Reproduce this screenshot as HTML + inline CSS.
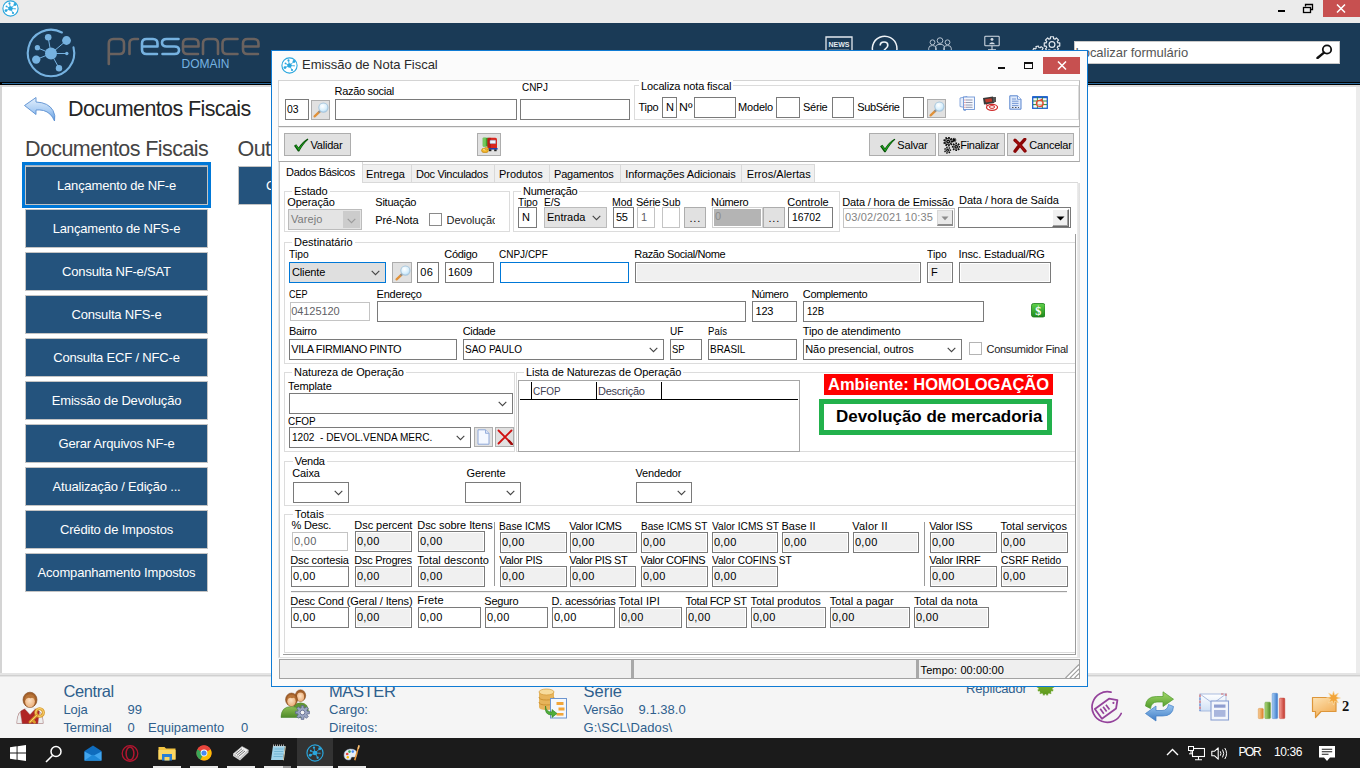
<!DOCTYPE html><html><head><meta charset="utf-8"><title>Emissão de Nota Fiscal</title>
<style>
html,body{margin:0;padding:0;}
body{width:1360px;height:768px;overflow:hidden;position:relative;background:#fff;
 font-family:"Liberation Sans",sans-serif;font-size:11px;color:#000;}
div,span,svg{position:absolute;box-sizing:border-box;}
.t{white-space:nowrap;}
.in{border:1px solid #7a7a7a;background:#fff;white-space:nowrap;overflow:hidden;line-height:14px;padding-left:2px;}
.ing{border:1px solid #7a7a7a;background:#f0f0f0;box-shadow:inset 0 0 0 1px #fff;white-space:nowrap;overflow:hidden;line-height:14px;padding-left:2px;}
.ind{border:1px solid #c4c4c4;background:#fff;color:#5f5f66;white-space:nowrap;overflow:hidden;line-height:14px;padding-left:2px;}
.btn{border:1px solid #adadad;background:#e1e1e1;white-space:nowrap;}
.gb{border:1px solid #dcdcdc;}
.gl{background:#fff;padding:0 2px;white-space:nowrap;line-height:13px;}
.sb{background:#24537d;border:1px solid #c4c4c4;color:#fff;font-size:13px;text-align:center;white-space:nowrap;}
.info{color:#2f5f8d;white-space:nowrap;}
</style></head><body>
<div style="left:0px;top:0px;width:1360px;height:23px;background:#ebebeb;"></div>
<svg style="left:2px;top:0px;" width="17" height="17" viewBox="0 0 17 17"><circle cx="8.5" cy="8.5" r="7.6" fill="#fff" stroke="#2aa7de" stroke-width="1.1"/><g stroke="#2aa7de" stroke-width="0.8"><path d="M8.5 8.5L7.5 3.5M8.5 8.5L13 4.5M8.5 8.5L13.2 8.8M8.5 8.5L11 13M8.5 8.5L4 10.5M8.5 8.5L4.5 6.5"/></g><g fill="#2aa7de"><circle cx="8.5" cy="8.5" r="2.2"/><circle cx="7.5" cy="3.4" r="1.1"/><circle cx="13" cy="4.5" r="1.4"/><circle cx="13.3" cy="8.8" r="0.8" fill-opacity="0.6"/><circle cx="11" cy="13" r="1.1"/><circle cx="4" cy="10.6" r="1.4"/><circle cx="4.5" cy="6.4" r="0.9"/></g></svg>
<div style="left:1278px;top:10px;width:7px;height:2px;background:#000;"></div>
<svg style="left:1302px;top:3px;" width="12" height="11" viewBox="0 0 12 11"><path d="M3.5 3.5V1.5H10.5V6.5H8.5" fill="none" stroke="#000" stroke-width="1.3"/><rect x="1.5" y="4.5" width="7" height="5" fill="#ebebeb" stroke="#000" stroke-width="1.3"/></svg>
<div style="left:1323px;top:0px;width:37px;height:17px;background:#c75050;"></div>
<svg style="left:1336px;top:4px;" width="10" height="9" viewBox="0 0 10 9"><path d="M1 0.5L9 8.5M9 0.5L1 8.5" stroke="#fff" stroke-width="1.5"/></svg>
<div style="left:0px;top:23px;width:1360px;height:59px;background:#1a3a56;"></div>
<div style="left:0px;top:82px;width:1360px;height:3px;background:#000;"></div>
<div style="left:2px;top:83px;width:1358px;height:1px;background:#2a6a9c;"></div>
<div style="left:0px;top:85px;width:1360px;height:2px;background:#dcdcdc;"></div>
<svg style="left:24px;top:26px;" width="54" height="54" viewBox="0 0 54 54"><path d="M49.51 21.39A23.2 23.2 0 1 1 37.89 6.52" fill="none" stroke="#76b2e0" stroke-width="2.1" stroke-linecap="round"/><g stroke="#76b2e0" stroke-width="1"><path d="M27 27.5L24.2 11.5M27 27.5L42.5 14.5M27 27.5L42.8 27.5M27 27.5L35 42M27 27.5L12.3 33.5M27 27.5L13.5 21.8"/></g><g fill="#76b2e0"><circle cx="27" cy="27.5" r="6"/><circle cx="24.2" cy="11.3" r="3.3"/><circle cx="42.5" cy="14.5" r="4.4"/><circle cx="42.8" cy="27.5" r="1.7"/><circle cx="35" cy="42.2" r="3.2"/><circle cx="12.2" cy="33.6" r="4.2"/><circle cx="13.4" cy="21.7" r="2.6"/></g></svg>
<svg style="left:104px;top:34px;" width="160" height="36" viewBox="0 0 160 36"><path d="M4.8 30V9.5Q4.8 5 9.3 5H15.5Q20 5 20 9.5V15.5Q20 20 15.5 20H5" fill="none" stroke="#6a625f" stroke-width="2.6" stroke-linecap="round"/><path d="M25.5 20V9.5Q25.5 5 30 5H34" fill="none" stroke="#6a625f" stroke-width="2.6" stroke-linecap="round"/><path d="M38.0 12.5H53.5V9.5Q53.5 5 49.0 5H42.5Q38.0 5 38.0 9.5V15.5Q38.0 20 42.5 20H53.0" fill="none" stroke="#76b2e0" stroke-width="2.6" stroke-linecap="round" stroke-linejoin="round"/><path d="M74.5 5H62.5Q58 5 58 8.8Q58 12.5 62.5 12.5H70.5Q75 12.5 75 16.2Q75 20 70.5 20H58.5" fill="none" stroke="#76b2e0" stroke-width="2.6" stroke-linecap="round"/><path d="M79.0 12.5H94.5V9.5Q94.5 5 90.0 5H83.5Q79.0 5 79.0 9.5V15.5Q79.0 20 83.5 20H94.0" fill="none" stroke="#6a625f" stroke-width="2.6" stroke-linecap="round" stroke-linejoin="round"/><path d="M99 20V9.5Q99 5 103.5 5H109.5Q114 5 114 9.5V20" fill="none" stroke="#6a625f" stroke-width="2.6" stroke-linecap="round"/><path d="M133.5 5H123Q118.5 5 118.5 9.5V15.5Q118.5 20 123 20H133.5" fill="none" stroke="#6a625f" stroke-width="2.6" stroke-linecap="round"/><path d="M139.0 12.5H154.5V9.5Q154.5 5 150.0 5H143.5Q139.0 5 139.0 9.5V15.5Q139.0 20 143.5 20H154.0" fill="none" stroke="#6a625f" stroke-width="2.6" stroke-linecap="round" stroke-linejoin="round"/><text x="77.5" y="34" font-family="Liberation Sans, sans-serif" font-size="12.6" fill="#76b2e0" textLength="48" lengthAdjust="spacingAndGlyphs" style="font-stretch:condensed">DOMAIN</text></svg>
<svg style="left:818px;top:34px;" width="36" height="30" viewBox="0 0 36 30"><path d="M8 29V3H34V29" fill="none" stroke="#e3e9ef" stroke-width="1.3"/><path d="M2.5 23V29H8" fill="none" stroke="#e3e9ef" stroke-width="1.3"/><text x="10.5" y="12.8" font-family="Liberation Sans, sans-serif" font-weight="bold" font-size="8" fill="#e3e9ef" textLength="21" lengthAdjust="spacingAndGlyphs">NEWS</text><path d="M11 16.5H31" stroke="#e3e9ef" stroke-width="1.6"/></svg>
<svg style="left:868.2px;top:34.2px;" width="32" height="32" viewBox="0 0 32 32"><path d="M26 22.5A12.3 12.3 0 1 0 16 26.8" fill="none" stroke="#eef2f6" stroke-width="1.5"/><path d="M12.2 11.5Q12.2 8 16 8Q19.8 8 19.8 11.3Q19.8 13.3 17.7 14.6Q16 15.7 16 17.5" fill="none" stroke="#eef2f6" stroke-width="1.7"/><circle cx="16" cy="20.8" r="1.1" fill="#eef2f6"/></svg>
<svg style="left:926.2px;top:35.5px;" width="28" height="24" viewBox="0 0 28 24"><circle cx="6.5" cy="6.3" r="2.43" fill="none" stroke="#b4c1cf" stroke-width="1"/><path d="M2.72 15.30V12.15Q2.72 9.54 6.5 9.54Q10.28 9.54 10.28 12.15V15.30" fill="none" stroke="#b4c1cf" stroke-width="1"/><circle cx="21.5" cy="6.3" r="2.43" fill="none" stroke="#b4c1cf" stroke-width="1"/><path d="M17.72 15.30V12.15Q17.72 9.54 21.5 9.54Q25.28 9.54 25.28 12.15V15.30" fill="none" stroke="#b4c1cf" stroke-width="1"/><circle cx="14" cy="4.6" r="2.84" fill="none" stroke="#b4c1cf" stroke-width="1"/><path d="M9.59 15.10V11.43Q9.59 8.38 14 8.38Q18.41 8.38 18.41 11.43V15.10" fill="none" stroke="#b4c1cf" stroke-width="1"/></svg>
<svg style="left:984px;top:35px;" width="16" height="19.2" viewBox="0 0 20 24"><rect x="1" y="1.5" width="18" height="12" rx="1" fill="none" stroke="#d5dde6" stroke-width="1.3"/><circle cx="10" cy="5.5" r="1.8" fill="#d5dde6"/><path d="M6 11.5Q10 6.5 14 11.5Z" fill="#d5dde6"/><path d="M10 13.5V18M5 18.5H15" stroke="#d5dde6" stroke-width="1.3"/></svg>
<svg style="left:1030px;top:34px;" width="32" height="30" viewBox="0 0 32 30"><path d="M29.75 8.96L29.75 12.04L27.90 12.04L27.26 13.58L28.57 14.89L26.39 17.07L25.08 15.76L23.54 16.40L23.54 18.25L20.46 18.25L20.46 16.40L18.92 15.76L17.61 17.07L15.43 14.89L16.74 13.58L16.10 12.04L14.25 12.04L14.25 8.96L16.10 8.96L16.74 7.42L15.43 6.11L17.61 3.93L18.92 5.24L20.46 4.60L20.46 2.75L23.54 2.75L23.54 4.60L25.08 5.24L26.39 3.93L28.57 6.11L27.26 7.42L27.90 8.96Z" fill="none" stroke="#e3e9ef" stroke-width="1.2" stroke-linejoin="round"/><circle cx="22" cy="10.5" r="2.9" fill="none" stroke="#e3e9ef" stroke-width="1.2"/><path d="M14.35 16.66L14.35 19.34L12.81 19.29L12.20 20.56L13.19 21.74L11.10 23.41L10.18 22.18L8.80 22.49L8.50 24.00L5.90 23.41L6.28 21.91L5.18 21.04L3.81 21.74L2.65 19.34L4.06 18.70L4.06 17.30L2.65 16.66L3.81 14.26L5.18 14.96L6.28 14.09L5.90 12.59L8.50 12.00L8.80 13.51L10.18 13.82L11.10 12.59L13.19 14.26L12.20 15.44L12.81 16.71Z" fill="none" stroke="#e3e9ef" stroke-width="1.1" stroke-linejoin="round"/></svg>
<div style="left:1074px;top:41px;width:266px;height:23px;background:#fff;border:1px solid #c9c9c9;"></div>
<span class="t" style="left:1075.5px;top:45px;line-height:16px;font-size:13px;color:#555;letter-spacing:-0.04px;">Localizar formulário</span>
<svg style="left:1316px;top:44px;" width="17" height="15" viewBox="0 0 17 15"><circle cx="11" cy="5.5" r="4.2" fill="none" stroke="#111" stroke-width="1.8"/><path d="M8 8.6L1.5 14" stroke="#111" stroke-width="2.4" stroke-linecap="round"/></svg>
<div style="left:0px;top:87px;width:1360px;height:586px;background:#fff;"></div>
<div style="left:0px;top:85px;width:2px;height:590px;background:#d4d4d4;"></div>
<div style="left:1356px;top:87px;width:4px;height:588px;background:#ececec;"></div>
<div style="left:0px;top:673px;width:1360px;height:4px;background:#e4e4e4;"></div>
<div style="left:0px;top:675px;width:1360px;height:1px;background:#d0d0d0;"></div>
<svg style="left:23px;top:94px;" width="34" height="28" viewBox="0 0 34 28"><defs><linearGradient id="ba" x1="0" y1="0" x2="0" y2="1"><stop offset="0" stop-color="#e6f1fc"/><stop offset="0.55" stop-color="#a9ccf3"/><stop offset="1" stop-color="#5f9be0"/></linearGradient></defs><path d="M1.5 11.5L13 3.5V8Q25.5 8.5 30 16.5Q32.8 21.5 31.5 27Q28 18.5 20.5 16.5Q16.5 15.6 13 16V20.5Z" fill="url(#ba)" stroke="#5a8fd0" stroke-width="0.9" stroke-linejoin="round"/></svg>
<span class="t" style="left:68px;top:95px;line-height:28px;font-size:21.5px;color:#262626;letter-spacing:-0.61px;">Documentos Fiscais</span>
<span class="t" style="left:25px;top:135px;line-height:28px;font-size:21.5px;color:#444;letter-spacing:-0.58px;">Documentos Fiscais</span>
<span class="t" style="left:237.5px;top:135px;line-height:28px;font-size:21.5px;color:#444;letter-spacing:-0.58px;">Out</span>
<div style="left:22px;top:162px;width:189px;height:46px;background:#9db3c8;border:3px solid #0078d7;"></div>
<div class="sb" style="left:25px;top:166px;width:183px;height:39px;line-height:37px;letter-spacing:-0.173px;">Lançamento de NF-e</div>
<div class="sb" style="left:25px;top:209px;width:183px;height:39px;line-height:37px;letter-spacing:-0.173px;">Lançamento de NFS-e</div>
<div class="sb" style="left:25px;top:252px;width:183px;height:39px;line-height:37px;letter-spacing:-0.173px;">Consulta NF-e/SAT</div>
<div class="sb" style="left:25px;top:295px;width:183px;height:39px;line-height:37px;letter-spacing:-0.173px;">Consulta NFS-e</div>
<div class="sb" style="left:25px;top:338px;width:183px;height:39px;line-height:37px;letter-spacing:-0.173px;">Consulta ECF / NFC-e</div>
<div class="sb" style="left:25px;top:381px;width:183px;height:39px;line-height:37px;letter-spacing:-0.173px;">Emissão de Devolução</div>
<div class="sb" style="left:25px;top:424px;width:183px;height:39px;line-height:37px;letter-spacing:-0.173px;">Gerar Arquivos NF-e</div>
<div class="sb" style="left:25px;top:467px;width:183px;height:39px;line-height:37px;letter-spacing:-0.173px;">Atualização / Edição ...</div>
<div class="sb" style="left:25px;top:510px;width:183px;height:39px;line-height:37px;letter-spacing:-0.173px;">Crédito de Impostos</div>
<div class="sb" style="left:25px;top:553px;width:183px;height:39px;line-height:37px;letter-spacing:-0.173px;">Acompanhamento Impostos</div>
<div class="sb" style="left:238px;top:166px;width:183px;height:39px;line-height:37px;text-align:left;padding-left:27px;">C</div>
<div style="left:0px;top:677px;width:1360px;height:61px;background:#f5f5f5;"></div>
<svg style="left:15px;top:691px;" width="30" height="34" viewBox="0 0 30 34"><defs><radialGradient id="sk" cx="0.45" cy="0.4" r="0.7"><stop offset="0" stop-color="#fde2c4"/><stop offset="1" stop-color="#e9a870"/></radialGradient></defs><path d="M2 32.5Q2 20 10 18L15 22.5L20 18Q28 20 28 32.5Z" fill="#b02525" stroke="#7a1515" stroke-width="0.6"/><path d="M10 18L15 23.5L20 18L17.5 16.5H12.5Z" fill="#f6f6f6" stroke="#bdbdbd" stroke-width="0.4"/><path d="M2 32.5Q2 24.5 5.2 21L7 32.5ZM28 32.5Q28 24.5 24.8 21L23 32.5Z" fill="#eeeeee" stroke="#bdbdbd" stroke-width="0.4"/><ellipse cx="15" cy="8.8" rx="7" ry="7.6" fill="#a3602a" stroke="#7c4318" stroke-width="0.6"/><ellipse cx="15" cy="10.6" rx="4.9" ry="5.8" fill="url(#sk)"/><path d="M9.6 9.5Q12.5 5.6 15.5 7.2Q18.5 5.8 20.4 9.5Q20 3.2 15 3.2Q10 3.2 9.6 9.5Z" fill="#b87438"/><circle cx="24.6" cy="21.5" r="3.8" fill="none" stroke="#d99a2a" stroke-width="3"/><circle cx="24.6" cy="21.5" r="3.8" fill="none" stroke="#f7d070" stroke-width="1.2"/><path d="M21.8 24.3L15 31M17.2 28.8L19.6 31.2" stroke="#d99a2a" stroke-width="2.8" stroke-linecap="round"/><path d="M21.8 24.3L15.2 30.8" stroke="#f7d070" stroke-width="1" stroke-linecap="round"/></svg>
<span class="t info" style="left:63.5px;top:681px;line-height:20px;font-size:16.5px;letter-spacing:-0.41px;">Central</span>
<span class="t info" style="left:63.5px;top:702px;line-height:16px;font-size:13px;letter-spacing:-0.14px;">Loja</span>
<span class="t info" style="left:127.5px;top:702px;line-height:16px;font-size:13px;letter-spacing:-0.04px;">99</span>
<span class="t info" style="left:63.5px;top:720px;line-height:16px;font-size:13px;letter-spacing:-0.14px;">Terminal</span>
<span class="t info" style="left:127.5px;top:720px;line-height:16px;font-size:13px;">0</span>
<span class="t info" style="left:148px;top:720px;line-height:16px;font-size:13px;letter-spacing:-0.04px;">Equipamento</span>
<span class="t info" style="left:241px;top:720px;line-height:16px;font-size:13px;">0</span>
<svg style="left:280px;top:688px;" width="30" height="32" viewBox="0 0 30 32"><defs><radialGradient id="sk2" cx="0.45" cy="0.4" r="0.7"><stop offset="0" stop-color="#fde2c4"/><stop offset="1" stop-color="#e9a870"/></radialGradient><linearGradient id="gr2" x1="0" y1="0" x2="0" y2="1"><stop offset="0" stop-color="#8fbf55"/><stop offset="1" stop-color="#4f8a2a"/></linearGradient></defs><path d="M12 25Q12 14.5 20.5 14.5Q29 14.5 29 25Z" fill="#5f9435"/><ellipse cx="20.5" cy="7.6" rx="5.2" ry="5.8" fill="#a3602a" stroke="#7c4318" stroke-width="0.5"/><ellipse cx="20.5" cy="9" rx="3.6" ry="4.4" fill="url(#sk2)"/><path d="M1 29.5Q1 18.5 11.5 18.5Q22 18.5 22 29.5Z" fill="url(#gr2)" stroke="#3f7a22" stroke-width="0.5"/><ellipse cx="11.5" cy="11.6" rx="6" ry="6.6" fill="#a3602a" stroke="#7c4318" stroke-width="0.5"/><ellipse cx="11.5" cy="13.2" rx="4.2" ry="5" fill="url(#sk2)"/><path d="M7 12Q9.5 8.8 12 10.2Q14.6 8.8 16 12Q15.6 6.8 11.5 6.8Q7.4 6.8 7 12Z" fill="#b87438"/><path d="M29.37 23.13L29.37 25.87L27.34 25.76L26.81 27.03L28.32 28.39L26.39 30.32L25.03 28.81L23.76 29.34L23.87 31.37L21.13 31.37L21.24 29.34L19.97 28.81L18.61 30.32L16.68 28.39L18.19 27.03L17.66 25.76L15.63 25.87L15.63 23.13L17.66 23.24L18.19 21.97L16.68 20.61L18.61 18.68L19.97 20.19L21.24 19.66L21.13 17.63L23.87 17.63L23.76 19.66L25.03 20.19L26.39 18.68L28.32 20.61L26.81 21.97L27.34 23.24Z" fill="#9aa5c2" stroke="#5a668a" stroke-width="0.8"/><circle cx="22.5" cy="24.5" r="2.3" fill="#f5f5f5" stroke="#5a668a" stroke-width="0.8"/></svg>
<span class="t info" style="left:329px;top:681px;line-height:20px;font-size:16.5px;letter-spacing:-0.39px;">MASTER</span>
<span class="t info" style="left:329px;top:702px;line-height:16px;font-size:13px;letter-spacing:-0.01px;">Cargo:</span>
<span class="t info" style="left:329px;top:720px;line-height:16px;font-size:13px;letter-spacing:0.12px;">Direitos:</span>
<svg style="left:537px;top:688px;" width="32" height="32" viewBox="0 0 32 32"><path d="M2 4V19Q2 22 9.5 22Q17 22 17 19V4Z" fill="#e7b45a"/><ellipse cx="9.5" cy="4" rx="7.5" ry="3" fill="#f7dc9c" stroke="#d39a3a" stroke-width="0.7"/><path d="M2 9Q2 12 9.5 12Q17 12 17 9M2 14Q2 17 9.5 17Q17 17 17 14" fill="none" stroke="#c98f2e" stroke-width="0.9"/><rect x="13.5" y="10.5" width="16" height="19.5" fill="#f4f8fd" stroke="#6d95cf" stroke-width="1"/><rect x="19.5" y="14" width="7" height="3" fill="#f2a63a"/><rect x="21.5" y="19.5" width="6" height="3" fill="#f2a63a"/><rect x="19.5" y="25" width="7" height="2.6" fill="#f2a63a"/><path d="M8.5 18Q9 24 15 24V21.5L20 25.5L15 29.5V27Q7 27 8.5 18Z" fill="#4fae3a" stroke="#2e7d22" stroke-width="0.6"/></svg>
<span class="t info" style="left:583.5px;top:681px;line-height:20px;font-size:16.5px;">Série</span>
<span class="t info" style="left:583.5px;top:702px;line-height:16px;font-size:13px;letter-spacing:-0.08px;">Versão</span>
<span class="t info" style="left:638.5px;top:702px;line-height:16px;font-size:13px;letter-spacing:0.03px;">9.1.38.0</span>
<span class="t info" style="left:583.5px;top:720px;line-height:16px;font-size:13px;letter-spacing:0.1px;">G:\SCL\Dados\</span>
<span class="t info" style="left:966px;top:681px;line-height:16px;font-size:13px;letter-spacing:-0.14px;">Replicador</span>
<svg style="left:1036px;top:680px;" width="19" height="18" viewBox="0 0 19 18"><defs><linearGradient id="gg" x1="0" y1="0" x2="0" y2="1"><stop offset="0" stop-color="#86bd33"/><stop offset="1" stop-color="#5a961c"/></linearGradient></defs><path d="M18.15 6.03L18.15 7.97L16.92 8.09L16.66 9.24L17.71 9.87L16.87 11.63L15.71 11.20L14.98 12.12L15.65 13.15L14.13 14.37L13.27 13.48L12.21 13.99L12.37 15.21L10.47 15.65L10.09 14.48L8.91 14.48L8.53 15.65L6.63 15.21L6.79 13.99L5.73 13.48L4.87 14.37L3.35 13.15L4.02 12.12L3.29 11.20L2.13 11.63L1.29 9.87L2.34 9.24L2.08 8.09L0.85 7.97L0.85 6.03L2.08 5.91L2.34 4.76L1.29 4.13L2.13 2.37L3.29 2.80L4.02 1.88L3.35 0.85L4.87 -0.37L5.73 0.52L6.79 0.01L6.63 -1.21L8.53 -1.65L8.91 -0.48L10.09 -0.48L10.47 -1.65L12.37 -1.21L12.21 0.01L13.27 0.52L14.13 -0.37L15.65 0.85L14.98 1.88L15.71 2.80L16.87 2.37L17.71 4.13L16.66 4.76L16.92 5.91Z" fill="url(#gg)" stroke="#fff" stroke-opacity="0.7" stroke-width="0.6"/></svg>
<svg style="left:1090px;top:690px;" width="34" height="34" viewBox="0 0 34 34"><path d="M31.2 23.5A15.3 15.3 0 1 1 21 2.2" fill="none" stroke="#94429b" stroke-width="1.7" stroke-linecap="round"/><g transform="rotate(-36 17 17)"><path d="M6 11.5H23.5L29.5 17.5L23.5 23.5H6Z" fill="#f5f5f5" stroke="#94429b" stroke-width="1.8" stroke-linejoin="round"/><path d="M10.5 14.5V20.5M14 14.5V20.5M17.5 14.5V20.5" stroke="#94429b" stroke-width="1.7"/><circle cx="24.6" cy="17.5" r="1.1" fill="#94429b"/></g></svg>
<svg style="left:1144px;top:690.5px;" width="31" height="31" viewBox="0 0 31 31"><defs><linearGradient id="rg" x1="0" y1="0" x2="0" y2="1"><stop offset="0" stop-color="#a4d86a"/><stop offset="1" stop-color="#4f9a2a"/></linearGradient><linearGradient id="rb" x1="0" y1="0" x2="0" y2="1"><stop offset="0" stop-color="#9cc8f2"/><stop offset="1" stop-color="#3f7cc4"/></linearGradient></defs><path d="M1.5 15Q2 5.5 12.5 5.5H19V0.8L29.5 8.2L19 15.5V11H13Q7.5 11 6.5 17.5Z" fill="url(#rg)" stroke="#4e9a2a" stroke-width="0.7" stroke-linejoin="round"/><path d="M29.5 15.5Q29 25 18.5 25H12V30L1.5 22.5L12 15V19.5H18Q23.5 19.5 24.5 13.5Z" fill="url(#rb)" stroke="#3f7cc4" stroke-width="0.7" stroke-linejoin="round"/></svg>
<svg style="left:1199px;top:692px;" width="31" height="29" viewBox="0 0 31 29"><defs><linearGradient id="mb" x1="0" y1="0" x2="0" y2="1"><stop offset="0" stop-color="#ffffff"/><stop offset="1" stop-color="#cfe0f5"/></linearGradient></defs><rect x="1" y="2" width="26" height="17" fill="url(#mb)" stroke="#a9bbdf" stroke-width="1"/><path d="M1 2L14 11.5L27 2" fill="none" stroke="#a9bbdf" stroke-width="1"/><path d="M1 2.5V19" stroke="#d9534f" stroke-width="1.2" stroke-dasharray="2.5 3.5" stroke-opacity="0.8"/><path d="M1 5.5V19" stroke="#4a78d0" stroke-width="1.2" stroke-dasharray="2.5 3.5" stroke-opacity="0.8"/><path d="M22 2H27V6" fill="none" stroke="#d9534f" stroke-width="1.2" stroke-dasharray="2.5 2" stroke-opacity="0.8"/><rect x="12" y="9" width="17.5" height="19" fill="#f3f6fc" stroke="#8aa0d2" stroke-width="1.1"/><rect x="15" y="12.5" width="11.5" height="3.2" fill="#8f9ed0"/><rect x="15" y="18" width="11.5" height="6.8" fill="#a9b6dd"/></svg>
<svg style="left:1256px;top:691px;" width="31" height="29" viewBox="0 0 31 29"><defs><linearGradient id="c1" x1="0" x2="1"><stop offset="0" stop-color="#f9d09a"/><stop offset="1" stop-color="#dd7f26"/></linearGradient><linearGradient id="c2" x1="0" x2="1"><stop offset="0" stop-color="#b3dc7c"/><stop offset="1" stop-color="#4f8a26"/></linearGradient><linearGradient id="c3" x1="0" x2="1"><stop offset="0" stop-color="#a8cff5"/><stop offset="1" stop-color="#3877c8"/></linearGradient><linearGradient id="c4" x1="0" x2="1"><stop offset="0" stop-color="#f4a097"/><stop offset="1" stop-color="#c0342a"/></linearGradient></defs><rect x="2.3" y="17.4" width="5" height="10.2" rx="0.8" fill="url(#c1)" stroke="#d98a3a" stroke-width="0.5"/><rect x="8.9" y="11.2" width="5.5" height="16.4" rx="0.8" fill="url(#c2)" stroke="#5f9a2e" stroke-width="0.5"/><rect x="16.2" y="2.3" width="5.4" height="25.3" rx="0.8" fill="url(#c3)" stroke="#4a86d0" stroke-width="0.5"/><rect x="23.4" y="7.1" width="5.4" height="20.5" rx="0.8" fill="url(#c4)" stroke="#c8463a" stroke-width="0.5"/></svg>
<svg style="left:1311px;top:691px;" width="30" height="28" viewBox="0 0 30 28"><defs><linearGradient id="cb" x1="0" y1="0" x2="0.6" y2="1"><stop offset="0" stop-color="#fde3b4"/><stop offset="1" stop-color="#f2ad55"/></linearGradient></defs><path d="M1.5 6.5H25V20.5H10L4.5 26.5V20.5H1.5Z" fill="url(#cb)" stroke="#dd963a" stroke-width="1.2" stroke-linejoin="round"/><path d="M22.50 0.00L23.72 4.04L27.45 2.05L25.46 5.78L29.50 7.00L25.46 8.22L27.45 11.95L23.72 9.96L22.50 14.00L21.28 9.96L17.55 11.95L19.54 8.22L15.50 7.00L19.54 5.78L17.55 2.05L21.28 4.04Z" fill="#f2a53a" stroke="#f8dfae" stroke-width="0.6"/></svg>
<span class="t" style="left:1342px;top:698px;line-height:17.5px;font-size:14.5px;color:#111;font-family:&quot;Liberation Serif&quot;,serif;font-weight:bold;">2</span>
<div style="left:0px;top:738px;width:1360px;height:30px;background:#1b1b1b;"></div>
<div style="left:297px;top:738px;width:36px;height:30px;background:#333;"></div>
<svg style="left:10px;top:745px;" width="16" height="16" viewBox="0 0 17 17"><path d="M0 2.4L7 1.4V8H0ZM8 1.25L17 0V8H8ZM0 9H7V15.6L0 14.6ZM8 9H17V17L8 15.75Z" fill="#fff"/></svg>
<svg style="left:45px;top:745px;" width="18" height="18" viewBox="0 0 18 18"><circle cx="11" cy="6.5" r="5" fill="none" stroke="#fff" stroke-width="1.5"/><path d="M7.5 10.5L1 17" stroke="#fff" stroke-width="1.6"/></svg>
<svg style="left:84px;top:745px;" width="18" height="16" viewBox="0 0 18 16"><path d="M0.5 6L9 0.5L17.5 6V15.5H0.5Z" fill="#0f6cbd"/><path d="M0.5 6.5L9 11L17.5 6.5V15.5H0.5Z" fill="#41a5ee"/><path d="M0.5 15.5L9 9.5L17.5 15.5Z" fill="#1e88d8"/></svg>
<svg style="left:121px;top:745px;" width="18" height="17" viewBox="0 0 18 17"><ellipse cx="9" cy="8.5" rx="7.8" ry="7.8" fill="none" stroke="#b3152f" stroke-width="1.3"/><ellipse cx="9" cy="8.5" rx="3.9" ry="6.4" fill="none" stroke="#b3152f" stroke-width="1.5"/></svg>
<svg style="left:158px;top:745px;" width="18" height="16" viewBox="0 0 18 16"><path d="M0.5 2H6.5L8 3.5H17.5V14.5H0.5Z" fill="#f4c542"/><path d="M0.5 5H17.5V14.5H0.5Z" fill="#fbd764"/><rect x="4" y="9" width="10" height="6.5" fill="#2a7fd6"/><rect x="6.5" y="12" width="5" height="3.5" fill="#fbd764"/></svg>
<svg style="left:196px;top:745px;" width="16" height="16" viewBox="0 0 16 16"><circle cx="8" cy="8" r="7.6" fill="#e8453c"/><path d="M8 8L1.4 4.2A7.6 7.6 0 0 0 4.6 14.8Z" fill="#3aa757"/><path d="M8 8L4.6 14.8A7.6 7.6 0 0 0 15.6 8Q15.6 6 14.6 4.2Z" fill="#fbbd05"/><path d="M8 8L14.6 4.2A7.6 7.6 0 0 0 1.4 4.2Z" fill="#e8453c"/><circle cx="8" cy="8" r="3.4" fill="#fff"/><circle cx="8" cy="8" r="2.6" fill="#4a8af4"/></svg>
<svg style="left:232px;top:745px;" width="17" height="16" viewBox="0 0 17 16"><path d="M1 9L10 1.5L16.5 5L8 13.5Z" fill="#f2f2f2" stroke="#bdbdbd" stroke-width="0.6"/><path d="M3.5 9L10 3.7M5 10.3L11.5 5M6.5 11.5L13 6" stroke="#555" stroke-width="0.8"/><path d="M1 9L8 13.5L16.5 5V7.5L8 15.5L1 11Z" fill="#d0d0d0"/></svg>
<svg style="left:270px;top:744px;" width="16" height="17" viewBox="0 0 16 17"><path d="M3 2H15L13 16H1Z" fill="#9fd3ea"/><path d="M4.5 5H13.6M4.2 7.5H13.2M3.9 10H12.9M3.6 12.5H12.6" stroke="#5fa7c8" stroke-width="0.7"/><path d="M3.5 0.5V3M5.5 0.5V3M7.5 0.5V3M9.5 0.5V3M11.5 0.5V3M13.5 0.5V3" stroke="#cfcfcf" stroke-width="0.8"/><path d="M13 16L15 2L15.8 2.5L13.8 16.5Z" fill="#e9e2c0"/></svg>
<svg style="left:306px;top:744px;" width="18" height="18" viewBox="0 0 17 17"><circle cx="8.5" cy="8.5" r="7.6" fill="none" stroke="#2aa7de" stroke-width="1.1"/><g stroke="#2aa7de" stroke-width="0.8"><path d="M8.5 8.5L7.5 3.5M8.5 8.5L13 4.5M8.5 8.5L13.2 8.8M8.5 8.5L11 13M8.5 8.5L4 10.5M8.5 8.5L4.5 6.5"/></g><g fill="#2aa7de"><circle cx="8.5" cy="8.5" r="2.2"/><circle cx="7.5" cy="3.4" r="1.1"/><circle cx="13" cy="4.5" r="1.4"/><circle cx="13.3" cy="8.8" r="0.8" fill-opacity="0.6"/><circle cx="11" cy="13" r="1.1"/><circle cx="4" cy="10.6" r="1.4"/><circle cx="4.5" cy="6.4" r="0.9"/></g></svg>
<svg style="left:343px;top:745px;" width="18" height="17" viewBox="0 0 18 17"><path d="M7 4Q1 5 1 10Q1 15 6 15Q8 15 8 13.3Q8 12 9.5 12H11.5Q14 12 14 9Q14 4 7 4Z" fill="#e6edf5" stroke="#9fb4cc" stroke-width="0.5"/><circle cx="4.2" cy="9" r="1.3" fill="#e8453c"/><circle cx="6.5" cy="6.6" r="1.3" fill="#3aa757"/><circle cx="9.8" cy="6.6" r="1.3" fill="#4a8af4"/><circle cx="4.8" cy="12.3" r="1.2" fill="#fbbd05"/><path d="M15.2 0.5L16.5 1L12.5 15.5L11 15Z" fill="#e8963a"/><path d="M15.4 0L16.8 0.6L16 4L14.5 3.5Z" fill="#f6c27a"/></svg>
<div style="left:153px;top:766px;width:28px;height:2px;background:#e8e8e8;"></div>
<div style="left:190px;top:766px;width:28px;height:2px;background:#e8e8e8;"></div>
<div style="left:227px;top:766px;width:28px;height:2px;background:#e8e8e8;"></div>
<div style="left:264px;top:766px;width:19px;height:2px;background:#e8e8e8;"></div>
<div style="left:297px;top:766px;width:36px;height:2px;background:#e8e8e8;"></div>
<div style="left:338px;top:766px;width:28px;height:2px;background:#e8e8e8;"></div>
<div style="left:283px;top:766px;width:8px;height:2px;background:#9a9a9a;"></div>
<svg style="left:1166px;top:748px;" width="13" height="8" viewBox="0 0 13 8"><path d="M1 7L6.5 1.5L12 7" fill="none" stroke="#fff" stroke-width="1.4"/></svg>
<svg style="left:1188px;top:746px;" width="17" height="15" viewBox="0 0 17 15"><rect x="4.5" y="2.5" width="12" height="8" fill="none" stroke="#fff" stroke-width="1.1"/><path d="M10.5 10.5V13.5M7 13.8H14" stroke="#fff" stroke-width="1.1"/><rect x="0.5" y="0.5" width="5" height="4" fill="#1b1b1b" stroke="#fff" stroke-width="1"/><path d="M3 4.5V7.5M1 7.8H4.5" stroke="#fff" stroke-width="1"/></svg>
<svg style="left:1211px;top:746px;" width="18" height="15" viewBox="0 0 18 15"><path d="M0.8 5.2H3.6L7.2 1.8V13.2L3.6 9.8H0.8Z" fill="none" stroke="#fff" stroke-width="1.1" stroke-linejoin="round"/><path d="M9.3 5.3Q10.6 7.5 9.3 9.7M11.5 3.6Q14 7.5 11.5 11.4M13.8 2Q17.3 7.5 13.8 13" fill="none" stroke="#fff" stroke-width="1"/></svg>
<span class="t" style="left:1238.5px;top:745px;line-height:15px;font-size:12px;color:#fff;letter-spacing:-1.46px;">POR</span>
<span class="t" style="left:1274px;top:745px;line-height:15px;font-size:12px;color:#fff;letter-spacing:-0.4px;">10:36</span>
<svg style="left:1318px;top:745px;" width="18" height="17" viewBox="0 0 18 17"><path d="M1 1H17V12.5H12L9 16L6 12.5H1Z" fill="#fff"/><path d="M3.8 4.3H14.2M3.8 6.8H14.2M3.8 9.3H10.5" stroke="#1b1b1b" stroke-width="1.1"/></svg>
<div style="left:271px;top:50px;width:817px;height:637px;background:#fbfbfb;border:1px solid #0f7bd4;"></div>
<svg style="left:280.5px;top:56.5px;" width="17" height="17" viewBox="0 0 17 17"><circle cx="8.5" cy="8.5" r="7.6" fill="#fff" stroke="#2aa7de" stroke-width="1.1"/><g stroke="#2aa7de" stroke-width="0.8"><path d="M8.5 8.5L7.5 3.5M8.5 8.5L13 4.5M8.5 8.5L13.2 8.8M8.5 8.5L11 13M8.5 8.5L4 10.5M8.5 8.5L4.5 6.5"/></g><g fill="#2aa7de"><circle cx="8.5" cy="8.5" r="2.2"/><circle cx="7.5" cy="3.4" r="1.1"/><circle cx="13" cy="4.5" r="1.4"/><circle cx="13.3" cy="8.8" r="0.8" fill-opacity="0.6"/><circle cx="11" cy="13" r="1.1"/><circle cx="4" cy="10.6" r="1.4"/><circle cx="4.5" cy="6.4" r="0.9"/></g></svg>
<span class="t" style="left:302px;top:56px;line-height:18px;font-size:13px;color:#2a2a2a;letter-spacing:-0.04px;">Emissão de Nota Fiscal</span>
<div style="left:998px;top:66.5px;width:7px;height:2px;background:#111;"></div>
<div style="left:1024px;top:62px;width:9px;height:7px;border:1px solid #111;border-top:2px solid #111;"></div>
<div style="left:1043px;top:57px;width:37px;height:17px;background:#c75050;"></div>
<svg style="left:1057px;top:61px;" width="10" height="9" viewBox="0 0 10 9"><path d="M1 0.5L9 8.5M9 0.5L1 8.5" stroke="#fff" stroke-width="1.5"/></svg>
<div style="left:278px;top:80px;width:802px;height:47px;background:#fff;border:1px solid #d4d4d4;border-bottom:1px solid #a8a8a8;border-right:1px solid #b8b8b8;"></div>
<div class="in" style="left:285px;top:99px;width:24px;height:21px;"><span class="t" style="left:1.3px;top:2px;line-height:14px;transform:scaleX(0.9464);transform-origin:0 0;">03</span></div>
<div class="btn" style="left:311px;top:100px;width:19px;height:20px;"></div>
<svg style="left:312px;top:101px;" width="18" height="18" viewBox="0 0 18 18"><defs><radialGradient id="mg" cx="0.4" cy="0.35" r="0.75"><stop offset="0" stop-color="#ffffff"/><stop offset="0.6" stop-color="#d8effc"/><stop offset="1" stop-color="#9fcdf0"/></radialGradient></defs><path d="M7.6 10.6L2.6 15.4" stroke="#e0913a" stroke-width="2.3" stroke-linecap="round"/><path d="M8.6 9.6L6.6 11.6" stroke="#8e8e8e" stroke-width="2.1"/><circle cx="11.4" cy="6.6" r="4.6" fill="url(#mg)" stroke="#a8c6dc" stroke-width="1.1"/></svg>
<span class="t" style="left:334.55px;top:84px;line-height:14px;letter-spacing:-0.304px;">Razão social</span>
<div class="in" style="left:335px;top:99px;width:182px;height:21px;padding-top:2px;letter-spacing:-0.25px;"></div>
<span class="t" style="left:522.3px;top:80px;line-height:14px;transform:scaleX(0.9010);transform-origin:0 0;">CNPJ</span>
<div class="in" style="left:520px;top:99px;width:110px;height:21px;padding-top:2px;letter-spacing:-0.25px;"></div>
<div class="gb" style="left:634px;top:85px;width:445px;height:35px;"></div>
<span class="gl" style="left:639.05px;top:79.7px;letter-spacing:-0.135px;">Localiza nota fiscal</span>
<span class="t" style="left:638.55px;top:100px;line-height:14px;letter-spacing:-0.287px;">Tipo</span>
<div class="in" style="left:662px;top:97px;width:15px;height:21px;padding-top:2px;letter-spacing:-0.25px;padding-left:3px;">N</div>
<span class="t" style="left:679.3px;top:100px;line-height:14px;transform:scaleX(1.1186);transform-origin:0 0;">Nº</span>
<div class="in" style="left:694px;top:97px;width:42px;height:21px;padding-top:2px;letter-spacing:-0.25px;"></div>
<span class="t" style="left:738.05px;top:100px;line-height:14px;letter-spacing:-0.190px;">Modelo</span>
<div class="in" style="left:776px;top:97px;width:24px;height:21px;padding-top:2px;letter-spacing:-0.25px;"></div>
<span class="t" style="left:803.05px;top:100px;line-height:14px;letter-spacing:-0.262px;">Série</span>
<div class="in" style="left:832px;top:97px;width:22px;height:21px;padding-top:2px;letter-spacing:-0.25px;"></div>
<span class="t" style="left:857.3px;top:100px;line-height:14px;letter-spacing:-0.375px;">SubSérie</span>
<div class="in" style="left:903px;top:97px;width:21px;height:21px;padding-top:2px;letter-spacing:-0.25px;"></div>
<div class="btn" style="left:927px;top:99px;width:19px;height:19px;"></div>
<svg style="left:928px;top:99.5px;" width="18" height="18" viewBox="0 0 18 18"><defs><radialGradient id="mg" cx="0.4" cy="0.35" r="0.75"><stop offset="0" stop-color="#ffffff"/><stop offset="0.6" stop-color="#d8effc"/><stop offset="1" stop-color="#9fcdf0"/></radialGradient></defs><path d="M7.6 10.6L2.6 15.4" stroke="#e0913a" stroke-width="2.3" stroke-linecap="round"/><path d="M8.6 9.6L6.6 11.6" stroke="#8e8e8e" stroke-width="2.1"/><circle cx="11.4" cy="6.6" r="4.6" fill="url(#mg)" stroke="#a8c6dc" stroke-width="1.1"/></svg>
<svg style="left:959px;top:95px;" width="16" height="16" viewBox="0 0 16 16"><path d="M1 3L8 1.5V13L1 11.5Z" fill="#e6eefb" stroke="#6f95d6" stroke-width="0.8"/><rect x="4.5" y="2" width="11" height="12.5" fill="#f4f8ff" stroke="#6f95d6" stroke-width="0.9"/><path d="M7 5H13.5M7 7.5H13.5M7 10H13.5M7 12.3H13.5" stroke="#8a8fa8" stroke-width="0.9"/><path d="M5.6 5H6.4M5.6 7.5H6.4M5.6 10H6.4M5.6 12.3H6.4" stroke="#d03030" stroke-width="1"/><path d="M4 14.5L6 15.8L7.5 14.5" fill="none" stroke="#6f95d6" stroke-width="0.8"/></svg>
<svg style="left:982px;top:95px;" width="16" height="16" viewBox="0 0 16 16"><path d="M1 3L11 1.5L12.5 8L2 9.5Z" fill="#3a3a3a"/><path d="M3 4.2L9.5 3.3L10.3 6.6L3.8 7.6Z" fill="#c0392b"/><rect x="11" y="2" width="3" height="5" fill="#555"/><ellipse cx="10" cy="12.3" rx="5.5" ry="3" fill="none" stroke="#d02a2a" stroke-width="1.2"/><ellipse cx="10" cy="12" rx="2.6" ry="1.4" fill="#fff" stroke="#d02a2a" stroke-width="1"/><path d="M4 9.5L6.5 11" stroke="#d02a2a" stroke-width="1.2"/></svg>
<svg style="left:1008.5px;top:95px;" width="13" height="15" viewBox="0 0 13 15"><path d="M0.8 0.8H8.5L12 4.3V14.2H0.8Z" fill="#dfeafb" stroke="#5b86cf" stroke-width="1"/><path d="M8.5 0.8V4.3H12" fill="#fff" stroke="#5b86cf" stroke-width="0.8"/><path d="M3 4H7M3 6.2H9.5M3 8.4H9.5M3 10.6H9.5" stroke="#6a8fd0" stroke-width="0.9"/><path d="M3 12.5H4.5M6 12.5H7.5M9 12.5H10" stroke="#444" stroke-width="0.9"/></svg>
<svg style="left:1032px;top:96px;" width="16" height="13" viewBox="0 0 16 13"><rect x="0.7" y="0.9" width="14.6" height="11.4" fill="#f8fbf4" stroke="#1f62cc" stroke-width="1.3"/><path d="M0.7 1.2H15.3" stroke="#1f62cc" stroke-width="2"/><path d="M1 5H15M1 8.6H15" stroke="#2e8a3a" stroke-width="1"/><path d="M5.4 1V12.3M10.4 1V12.3" stroke="#2e8a3a" stroke-width="0.9"/><ellipse cx="7.8" cy="7.4" rx="3.3" ry="3" fill="#fbe9e4" fill-opacity="0.6" stroke="#e8452e" stroke-width="1.4"/><path d="M8 4.6Q9.5 3.2 10.6 3.4" stroke="#e8452e" stroke-width="1.1" fill="none"/></svg>
<div style="left:278px;top:127px;width:802px;height:35px;background:#fff;border:1px solid #d4d4d4;border-top:1px solid #ececec;border-bottom:1px solid #a8a8a8;border-right:1px solid #b8b8b8;"></div>
<div class="btn" style="left:284px;top:133px;width:67px;height:23px;"></div>
<svg style="left:293px;top:138px;" width="16" height="14" viewBox="0 0 16 14"><path d="M1 7.8L3.2 6.2L5.6 9.6Q9.5 3.5 14.6 0.6L15.4 1.4Q10.5 5.6 6.2 13.4H5Z" fill="#064d06"/><path d="M2.2 7.6L3.2 6.9L5.7 10.6Q9.6 4.4 14.2 1.4Q10 5.2 5.9 12.4Z" fill="#22a522"/></svg>
<span class="t" style="left:310.55px;top:138px;line-height:14px;letter-spacing:-0.216px;">Validar</span>
<div class="btn" style="left:477px;top:133px;width:24px;height:23px;"></div>
<svg style="left:480.5px;top:136px;" width="17" height="17" viewBox="0 0 17 17"><rect x="1.8" y="1.7" width="7" height="8.8" rx="0.8" fill="#3f9e2f"/><rect x="1.8" y="1.7" width="3" height="8.8" fill="#74c95c"/><path d="M6.6 3.2Q6.6 1.7 8.1 1.7H14.4Q16 1.7 16 3.3V12.6H6.6Z" fill="#d9271f"/><path d="M6.6 1.9H10V12.6H6.6Z" fill="#b81c16"/><rect x="9" y="4.3" width="5.6" height="3.2" rx="0.5" fill="#eef4fb" stroke="#8fb4e0" stroke-width="0.5"/><rect x="7" y="12" width="9.6" height="1.6" fill="#2440a8"/><rect x="8" y="13.4" width="2.4" height="1.8" fill="#222"/><rect x="13.2" y="13.4" width="2.4" height="1.8" fill="#222"/><ellipse cx="4" cy="14.4" rx="3.5" ry="2.3" fill="#f0b429" stroke="#b8801a" stroke-width="0.6"/><ellipse cx="4" cy="13.6" rx="2" ry="1" fill="#fbe08a"/><ellipse cx="5.6" cy="12.6" rx="2" ry="1.2" fill="#f0b429" stroke="#b8801a" stroke-width="0.5"/></svg>
<div class="btn" style="left:869px;top:133px;width:67px;height:23px;"></div>
<svg style="left:878.5px;top:137.5px;" width="17" height="15" viewBox="0 0 16 14"><path d="M1 7.8L3.2 6.2L5.6 9.6Q9.5 3.5 14.6 0.6L15.4 1.4Q10.5 5.6 6.2 13.4H5Z" fill="#064d06"/><path d="M2.2 7.6L3.2 6.9L5.7 10.6Q9.6 4.4 14.2 1.4Q10 5.2 5.9 12.4Z" fill="#22a522"/></svg>
<span class="t" style="left:897.3px;top:138px;line-height:14px;letter-spacing:-0.160px;">Salvar</span>
<div class="btn" style="left:938px;top:133px;width:67px;height:23px;"></div>
<svg style="left:942.5px;top:136.5px;" width="17" height="17" viewBox="0 0 17 17"><path d="M10.11 3.65L10.11 5.55L8.62 5.35L8.30 6.23L9.57 7.02L8.35 8.49L7.34 7.37L6.53 7.84L6.99 9.27L5.11 9.60L5.06 8.10L4.14 7.93L3.57 9.33L1.92 8.37L2.84 7.19L2.24 6.47L0.91 7.18L0.26 5.38L1.73 5.07L1.73 4.13L0.26 3.82L0.91 2.02L2.24 2.73L2.84 2.01L1.92 0.83L3.57 -0.13L4.14 1.27L5.06 1.10L5.11 -0.40L6.99 -0.07L6.53 1.36L7.34 1.83L8.35 0.71L9.57 2.18L8.30 2.97L8.62 3.85Z" fill="#0a0a0a"/><circle cx="5.2" cy="4.6" r="2.4" fill="none" stroke="#e1e1e1" stroke-width="0.7"/><circle cx="5.2" cy="4.6" r="0.675" fill="#e1e1e1"/><path d="M17.50 8.86L17.50 10.74L16.11 10.52L15.77 11.35L16.91 12.17L15.57 13.51L14.75 12.37L13.92 12.71L14.14 14.10L12.26 14.10L12.48 12.71L11.65 12.37L10.83 13.51L9.49 12.17L10.63 11.35L10.29 10.52L8.90 10.74L8.90 8.86L10.29 9.08L10.63 8.25L9.49 7.43L10.83 6.09L11.65 7.23L12.48 6.89L12.26 5.50L14.14 5.50L13.92 6.89L14.75 7.23L15.57 6.09L16.91 7.43L15.77 8.25L16.11 9.08Z" fill="#0a0a0a"/><circle cx="13.2" cy="9.8" r="2.3" fill="none" stroke="#e1e1e1" stroke-width="0.7"/><circle cx="13.2" cy="9.8" r="0.63" fill="#e1e1e1"/><path d="M8.09 12.32L8.09 14.08L6.91 13.85L6.55 14.60L7.46 15.38L6.09 16.48L5.53 15.41L4.72 15.60L4.68 16.80L2.97 16.41L3.45 15.31L2.80 14.79L1.84 15.51L1.07 13.92L2.24 13.61L2.24 12.79L1.07 12.48L1.84 10.89L2.80 11.61L3.45 11.09L2.97 9.99L4.68 9.60L4.72 10.80L5.53 10.99L6.09 9.92L7.46 11.02L6.55 11.80L6.91 12.55Z" fill="#0a0a0a"/><circle cx="4.6" cy="13.2" r="1.9" fill="none" stroke="#e1e1e1" stroke-width="0.7"/><circle cx="4.6" cy="13.2" r="0.45" fill="#e1e1e1"/><path d="M13.31 2.38L13.31 3.62L12.53 3.44L12.25 3.93L12.80 4.51L11.71 5.14L11.48 4.37L10.92 4.37L10.69 5.14L9.60 4.51L10.15 3.93L9.87 3.44L9.09 3.62L9.09 2.38L9.87 2.56L10.15 2.07L9.60 1.49L10.69 0.86L10.92 1.63L11.48 1.63L11.71 0.86L12.80 1.49L12.25 2.07L12.53 2.56Z" fill="#0a0a0a"/></svg>
<span class="t" style="left:960.3px;top:138px;line-height:14px;letter-spacing:-0.305px;">Finalizar</span>
<div class="btn" style="left:1007px;top:133px;width:67px;height:23px;"></div>
<svg style="left:1012.5px;top:137.5px;" width="14" height="15" viewBox="0 0 14 15"><path d="M2 2.2Q6.5 6 12 13M11.6 1.6Q6.5 7 2 13.2" fill="none" stroke="#8a0606" stroke-width="3.3" stroke-linecap="round"/><path d="M10.2 2.6Q11.4 1.2 12.6 0.8" fill="none" stroke="#8a0606" stroke-width="1.6" stroke-linecap="round"/><path d="M2.2 2.6Q6.5 6.2 11.6 12.6" fill="none" stroke="#b81414" stroke-width="0.9" stroke-linecap="round"/></svg>
<span class="t" style="left:1029.3px;top:138px;line-height:14px;letter-spacing:-0.199px;">Cancelar</span>
<div style="left:278px;top:162px;width:802px;height:496px;background:#fff;"></div>
<div style="left:278px;top:162px;width:1px;height:496px;background:#e4e4e4;"></div>
<div style="left:279px;top:162px;width:1px;height:496px;background:#c8c8c8;"></div>
<div style="left:1077px;top:183px;width:3px;height:475px;background:linear-gradient(90deg,#ededed,#dedede);"></div>
<div style="left:280px;top:182px;width:798px;height:1px;background:#d9d9d9;"></div>
<div style="left:283px;top:654px;width:793px;height:1px;background:#9c9c9c;"></div>
<div style="left:279px;top:657px;width:799px;height:1px;background:#e2e2e2;"></div>
<div style="left:362px;top:164px;width:50px;height:19px;background:#f0f0f0;border:1px solid #d9d9d9;"></div>
<span class="t" style="left:366.05px;top:167px;line-height:14px;letter-spacing:0.059px;">Entrega</span>
<div style="left:411px;top:164px;width:84px;height:19px;background:#f0f0f0;border:1px solid #d9d9d9;"></div>
<span class="t" style="left:416.05px;top:167px;line-height:14px;letter-spacing:-0.316px;">Doc Vinculados</span>
<div style="left:494px;top:164px;width:56px;height:19px;background:#f0f0f0;border:1px solid #d9d9d9;"></div>
<span class="t" style="left:499.05px;top:167px;line-height:14px;letter-spacing:-0.057px;">Produtos</span>
<div style="left:549px;top:164px;width:72px;height:19px;background:#f0f0f0;border:1px solid #d9d9d9;"></div>
<span class="t" style="left:554.05px;top:167px;line-height:14px;letter-spacing:-0.237px;">Pagamentos</span>
<div style="left:620px;top:164px;width:122px;height:19px;background:#f0f0f0;border:1px solid #d9d9d9;"></div>
<span class="t" style="left:625.3px;top:167px;line-height:14px;letter-spacing:-0.130px;">Informações Adicionais</span>
<div style="left:741px;top:164px;width:74px;height:19px;background:#f0f0f0;border:1px solid #d9d9d9;"></div>
<span class="t" style="left:746.8px;top:167px;line-height:14px;letter-spacing:0.026px;">Erros/Alertas</span>
<div style="left:279px;top:162px;width:84px;height:21px;background:#fff;border:1px solid #d9d9d9;border-top:none;border-bottom:none;border-left:1px solid #c8c8c8;"></div>
<span class="t" style="left:286.05px;top:165px;line-height:14px;letter-spacing:-0.353px;">Dados Básicos</span>
<div style="left:1075px;top:234px;width:1px;height:421px;background:#9c9c9c;"></div>
<div class="gb" style="left:284px;top:190.5px;width:226px;height:41.5px;"></div>
<span class="gl" style="left:292.05px;top:185.2px;letter-spacing:-0.123px;">Estado</span>
<span class="t" style="left:287.3px;top:195px;line-height:14px;letter-spacing:-0.097px;">Operação</span>
<div style="left:288px;top:209px;width:74px;height:21px;border:1px solid #bcbcbc;background:#e4e4e4;overflow:hidden;color:#7a7a7a;"><span class="t" style="left:2px;top:2px;line-height:14px;letter-spacing:0.080px;">Varejo</span></div>
<svg style="left:347px;top:217px;" width="9" height="6" viewBox="0 0 9 6"><path d="M0.7 0.8L4.5 4.6L8.3 0.8" fill="none" stroke="#a0a0a0" stroke-width="1.1"/></svg>
<div style="left:343px;top:211px;width:17px;height:17px;background:#cccccc;"></div>
<svg style="left:347px;top:217.5px;" width="9" height="6" viewBox="0 0 9 6"><path d="M0.7 0.8L4.5 4.6L8.3 0.8" fill="none" stroke="#9a9a9a" stroke-width="1.1"/></svg>
<span class="t" style="left:375.3px;top:195px;line-height:14px;letter-spacing:-0.240px;">Situação</span>
<span class="t" style="left:375.3px;top:213px;line-height:14px;letter-spacing:-0.091px;">Pré-Nota</span>
<div style="left:429px;top:213px;width:13px;height:13px;border:1px solid #8a8a8a;background:#fff;"></div>
<div style="left:446.5px;top:212.5px;width:48.8px;height:14px;overflow:hidden;"><span class="t" style="left:0;top:0;line-height:14px;letter-spacing:-0.03px;color:#222;">Devolução</span></div>
<div class="gb" style="left:513px;top:190.5px;width:327px;height:41.5px;"></div>
<span class="gl" style="left:521.05px;top:185.2px;letter-spacing:-0.279px;">Numeração</span>
<span class="t" style="left:517.8px;top:195px;line-height:14px;transform:scaleX(0.9351);transform-origin:0 0;">Tipo</span>
<span class="t" style="left:543.55px;top:195px;line-height:14px;transform:scaleX(0.9239);transform-origin:0 0;">E/S</span>
<div class="in" style="left:518px;top:207px;width:19px;height:21px;padding-top:2px;letter-spacing:-0.25px;padding-left:3px;">N</div>
<div style="left:544px;top:207px;width:63px;height:21px;border:1px solid #bcbcbc;background:#e3e3e3;overflow:hidden;"><span class="t" style="left:2px;top:2px;line-height:14px;letter-spacing:-0.025px;">Entrada</span></div>
<svg style="left:592px;top:215px;" width="9" height="6" viewBox="0 0 9 6"><path d="M0.7 0.8L4.5 4.6L8.3 0.8" fill="none" stroke="#444" stroke-width="1.1"/></svg>
<span class="t" style="left:612.3px;top:195px;line-height:14px;transform:scaleX(0.9524);transform-origin:0 0;">Mod</span>
<span class="t" style="left:636.05px;top:195px;line-height:14px;letter-spacing:-0.262px;">Série</span>
<span class="t" style="left:662.3px;top:195px;line-height:14px;transform:scaleX(0.9391);transform-origin:0 0;">Sub</span>
<div class="in" style="left:613px;top:207px;width:21px;height:21px;"><span class="t" style="left:2px;top:2px;line-height:14px;letter-spacing:-0.356px;">55</span></div>
<div class="ind" style="left:637px;top:207px;width:18px;height:21px;padding-top:2px;letter-spacing:-0.25px;padding-left:3px;">1</div>
<div class="ind" style="left:662px;top:207px;width:18px;height:21px;padding-top:2px;letter-spacing:-0.25px;"></div>
<div class="btn" style="left:684px;top:207px;width:22px;height:21px;"><span class="t" style="left:4.5px;top:2.5px;line-height:14px;letter-spacing:0.8px;">...</span></div>
<span class="t" style="left:711.05px;top:195px;line-height:14px;letter-spacing:-0.299px;">Número</span>
<div style="left:712px;top:207px;width:51px;height:21px;border:1px solid #d0d0d0;background:#fff;"></div>
<div style="left:714px;top:209px;width:47px;height:17px;background:#b4b4b4;color:#8c8c8c;line-height:15px;padding-left:1px;">0</div>
<div class="btn" style="left:763px;top:207px;width:22px;height:21px;"><span class="t" style="left:4.5px;top:2.5px;line-height:14px;letter-spacing:0.8px;">...</span></div>
<span class="t" style="left:787.3px;top:195px;line-height:14px;letter-spacing:-0.028px;">Controle</span>
<div class="in" style="left:788px;top:207px;width:45px;height:21px;"><span class="t" style="left:2.5px;top:2px;line-height:14px;transform:scaleX(0.9441);transform-origin:0 0;">16702</span></div>
<span class="t" style="left:842.3px;top:195px;line-height:14px;letter-spacing:-0.158px;">Data / hora de Emissão</span>
<div class="ind" style="left:843px;top:208px;width:112px;height:20px;color:#838383;padding-top:1px;"><span class="t" style="left:1px;top:1px;line-height:14px;letter-spacing:0.149px;">03/02/2021 10:35</span></div>
<div style="left:937px;top:210px;width:16px;height:16px;background:#e9e9e9;border:1px solid #d8d8d8;border-right:1px solid #8c8c8c;border-bottom:2px solid #8c8c8c;"></div>
<svg style="left:941px;top:216px;" width="8" height="5" viewBox="0 0 8 5"><path d="M0.5 0.5H7.5L4 4.2Z" fill="#8c8c8c"/></svg>
<span class="t" style="left:959.05px;top:193px;line-height:14px;letter-spacing:-0.086px;">Data / hora de Saída</span>
<div style="left:958px;top:207px;width:113px;height:21px;border:1px solid #7a7a7a;background:#fff;"></div>
<div style="left:1052px;top:209px;width:17px;height:18px;background:#f0f0f0;border:1px solid #fff;border-right:1px solid #696969;border-bottom:1px solid #696969;box-shadow:inset -1px -1px 0 #a0a0a0;"></div>
<svg style="left:1056px;top:215.5px;" width="9" height="5" viewBox="0 0 9 5"><path d="M0.5 0.5H8.5L4.5 4.6Z" fill="#000"/></svg>
<div class="gb" style="left:284px;top:241.5px;width:791px;height:122.5px;border-right:none;"></div>
<span class="gl" style="left:292.05px;top:236.2px;letter-spacing:-0.006px;">Destinatário</span>
<span class="t" style="left:289.05px;top:247px;line-height:14px;transform:scaleX(0.9351);transform-origin:0 0;">Tipo</span>
<div style="left:289px;top:262px;width:97px;height:21px;border:1px solid #0078d7;background:#dfdfdf;overflow:hidden;"><span class="t" style="left:2px;top:2px;line-height:14px;letter-spacing:-0.144px;">Cliente</span></div>
<svg style="left:371px;top:270px;" width="9" height="6" viewBox="0 0 9 6"><path d="M0.7 0.8L4.5 4.6L8.3 0.8" fill="none" stroke="#444" stroke-width="1.1"/></svg>
<div class="btn" style="left:392px;top:262px;width:20px;height:21px;"></div>
<svg style="left:393.5px;top:263.5px;" width="18" height="18" viewBox="0 0 18 18"><defs><radialGradient id="mg" cx="0.4" cy="0.35" r="0.75"><stop offset="0" stop-color="#ffffff"/><stop offset="0.6" stop-color="#d8effc"/><stop offset="1" stop-color="#9fcdf0"/></radialGradient></defs><path d="M7.6 10.6L2.6 15.4" stroke="#e0913a" stroke-width="2.3" stroke-linecap="round"/><path d="M8.6 9.6L6.6 11.6" stroke="#8e8e8e" stroke-width="2.1"/><circle cx="11.4" cy="6.6" r="4.6" fill="url(#mg)" stroke="#a8c6dc" stroke-width="1.1"/></svg>
<div class="in" style="left:417px;top:262px;width:22px;height:21px;"><span class="t" style="left:2.25px;top:2px;line-height:14px;letter-spacing:0.394px;">06</span></div>
<span class="t" style="left:444.3px;top:247px;line-height:14px;letter-spacing:-0.296px;">Código</span>
<div class="in" style="left:445px;top:262px;width:49px;height:21px;"><span class="t" style="left:2px;top:2px;line-height:14px;letter-spacing:-0.031px;">1609</span></div>
<span class="t" style="left:499.3px;top:247px;line-height:14px;transform:scaleX(0.9089);transform-origin:0 0;">CNPJ/CPF</span>
<div style="left:500px;top:262px;width:129px;height:21px;border:1px solid #0078d7;background:#fff;"></div>
<span class="t" style="left:634.3px;top:247px;line-height:14px;letter-spacing:-0.365px;">Razão Social/Nome</span>
<div class="ing" style="left:635px;top:262px;width:286px;height:21px;padding-top:2px;letter-spacing:-0.25px;"></div>
<span class="t" style="left:926.8px;top:247px;line-height:14px;transform:scaleX(0.9351);transform-origin:0 0;">Tipo</span>
<div class="ing" style="left:927px;top:262px;width:26px;height:21px;padding-top:2px;letter-spacing:-0.25px;padding-left:3px;">F</div>
<span class="t" style="left:958.55px;top:247px;line-height:14px;letter-spacing:-0.142px;">Insc. Estadual/RG</span>
<div class="ing" style="left:959px;top:262px;width:92px;height:21px;padding-top:2px;letter-spacing:-0.25px;"></div>
<span class="t" style="left:289.05px;top:287px;line-height:14px;transform:scaleX(0.8237);transform-origin:0 0;">CEP</span>
<div class="ind" style="left:290px;top:302px;width:80px;height:19px;"><span class="t" style="left:0.25px;top:1px;line-height:14px;letter-spacing:-0.081px;">04125120</span></div>
<span class="t" style="left:376.55px;top:287px;line-height:14px;letter-spacing:-0.244px;">Endereço</span>
<div class="in" style="left:377px;top:301px;width:369px;height:21px;padding-top:2px;letter-spacing:-0.25px;"></div>
<span class="t" style="left:751.55px;top:287px;line-height:14px;letter-spacing:-0.399px;">Número</span>
<div class="in" style="left:752px;top:301px;width:45px;height:21px;"><span class="t" style="left:2.5px;top:2px;line-height:14px;letter-spacing:-0.237px;">123</span></div>
<span class="t" style="left:802.8px;top:287px;line-height:14px;letter-spacing:-0.360px;">Complemento</span>
<div class="in" style="left:803px;top:301px;width:181px;height:21px;"><span class="t" style="left:2.5px;top:2px;line-height:14px;transform:scaleX(0.8752);transform-origin:0 0;">12B</span></div>
<svg style="left:1030.5px;top:303px;" width="14.5" height="14.5" viewBox="0 0 14.5 14.5"><defs><linearGradient id="dg" x1="0" y1="0" x2="0" y2="1"><stop offset="0" stop-color="#5fd24a"/><stop offset="1" stop-color="#1e8a1e"/></linearGradient></defs><rect x="0.5" y="0.5" width="13.5" height="13.5" rx="2" fill="url(#dg)" stroke="#1a7a1a" stroke-width="0.8"/><text x="7.2" y="11.6" text-anchor="middle" font-family="Liberation Serif, serif" font-weight="bold" font-size="12" fill="#fff">$</text></svg>
<span class="t" style="left:289.05px;top:324px;line-height:14px;letter-spacing:-0.293px;">Bairro</span>
<div class="in" style="left:289px;top:339px;width:168px;height:21px;"><span class="t" style="left:1.25px;top:2px;line-height:14px;letter-spacing:-0.342px;">VILA FIRMIANO PINTO</span></div>
<span class="t" style="left:462.8px;top:324px;line-height:14px;letter-spacing:-0.396px;">Cidade</span>
<div style="left:463px;top:339px;width:201px;height:21px;border:1px solid #7a7a7a;background:#fff;overflow:hidden;"><span class="t" style="left:1.25px;top:2px;line-height:14px;transform:scaleX(0.9103);transform-origin:0 0;">SAO PAULO</span></div>
<svg style="left:649px;top:347px;" width="9" height="6" viewBox="0 0 9 6"><path d="M0.7 0.8L4.5 4.6L8.3 0.8" fill="none" stroke="#444" stroke-width="1.1"/></svg>
<span class="t" style="left:669.8px;top:324px;line-height:14px;transform:scaleX(0.9125);transform-origin:0 0;">UF</span>
<div class="in" style="left:670px;top:339px;width:32px;height:21px;"><span class="t" style="left:1px;top:2px;line-height:14px;transform:scaleX(0.8607);transform-origin:0 0;">SP</span></div>
<span class="t" style="left:707.8px;top:324px;line-height:14px;transform:scaleX(0.8691);transform-origin:0 0;">País</span>
<div class="in" style="left:708px;top:339px;width:89px;height:21px;"><span class="t" style="left:1px;top:2px;line-height:14px;transform:scaleX(0.9042);transform-origin:0 0;">BRASIL</span></div>
<span class="t" style="left:802.8px;top:324px;line-height:14px;letter-spacing:-0.111px;">Tipo de atendimento</span>
<div style="left:803px;top:339px;width:159px;height:21px;border:1px solid #7a7a7a;background:#fff;overflow:hidden;"><span class="t" style="left:1.25px;top:2px;line-height:14px;letter-spacing:-0.080px;">Não presencial, outros</span></div>
<svg style="left:947px;top:347px;" width="9" height="6" viewBox="0 0 9 6"><path d="M0.7 0.8L4.5 4.6L8.3 0.8" fill="none" stroke="#444" stroke-width="1.1"/></svg>
<div style="left:969px;top:342px;width:13px;height:13px;border:1px solid #b4b4b4;background:#fff;"></div>
<span class="t" style="left:986.55px;top:342px;line-height:14px;color:#222;letter-spacing:-0.305px;">Consumidor Final</span>
<div class="gb" style="left:284px;top:371.5px;width:231px;height:80.5px;"></div>
<span class="gl" style="left:292.05px;top:366.2px;letter-spacing:-0.074px;">Natureza de Operação</span>
<span class="t" style="left:288.05px;top:379px;line-height:14px;letter-spacing:-0.108px;">Template</span>
<div style="left:289px;top:393px;width:224px;height:21px;border:1px solid #7a7a7a;background:#fff;overflow:hidden;"></div>
<svg style="left:498px;top:401px;" width="9" height="6" viewBox="0 0 9 6"><path d="M0.7 0.8L4.5 4.6L8.3 0.8" fill="none" stroke="#444" stroke-width="1.1"/></svg>
<span class="t" style="left:288.05px;top:414px;line-height:14px;transform:scaleX(0.9042);transform-origin:0 0;">CFOP</span>
<div style="left:289px;top:427px;width:182px;height:21px;border:1px solid #7a7a7a;background:#fff;overflow:hidden;"><span class="t" style="left:2px;top:2px;line-height:14px;transform:scaleX(0.9149);transform-origin:0 0;">1202&nbsp; - DEVOL.VENDA MERC.</span></div>
<svg style="left:456px;top:435px;" width="9" height="6" viewBox="0 0 9 6"><path d="M0.7 0.8L4.5 4.6L8.3 0.8" fill="none" stroke="#444" stroke-width="1.1"/></svg>
<div class="btn" style="left:474px;top:427px;width:19px;height:20px;"></div>
<svg style="left:477px;top:429px;" width="13" height="16" viewBox="0 0 13 16"><path d="M1 0.8H8.5L12 4.3V15.2H1Z" fill="#f4f8ff" stroke="#8fa8d8" stroke-width="1"/><path d="M8.5 0.8V4.3H12" fill="#dbe6f8" stroke="#8fa8d8" stroke-width="0.9"/></svg>
<div class="btn" style="left:495px;top:427px;width:19px;height:20px;"></div>
<svg style="left:496.5px;top:429px;" width="16" height="16" viewBox="0 0 16 16"><path d="M1.5 1.5L14.5 14.5M14.5 1.5L1.5 14.5" stroke="#d01010" stroke-width="1.8" stroke-linecap="round"/><path d="M12 12L15 15.5" stroke="#a00c0c" stroke-width="2.4" stroke-linecap="round"/></svg>
<div class="gb" style="left:516px;top:371.5px;width:559px;height:80.5px;border-right:none;"></div>
<span class="gl" style="left:524.05px;top:366.2px;letter-spacing:-0.103px;">Lista de Naturezas de Operação</span>
<div style="left:518px;top:380px;width:282px;height:72px;border:1px solid #a6a6a6;background:#fff;"></div>
<div style="left:520px;top:399px;width:278px;height:1px;background:#000;"></div>
<div style="left:531px;top:382px;width:1px;height:17px;background:#000;"></div>
<div style="left:596px;top:382px;width:1px;height:17px;background:#000;"></div>
<div style="left:661px;top:382px;width:1px;height:17px;background:#000;"></div>
<span class="t" style="left:533.05px;top:384px;line-height:14px;color:#3c3c50;transform:scaleX(0.9042);transform-origin:0 0;">CFOP</span>
<span class="t" style="left:598.05px;top:384px;line-height:14px;color:#3c3c50;letter-spacing:-0.253px;">Descrição</span>
<div style="left:824px;top:374px;width:229px;height:21px;background:#ff0000;"></div>
<span class="t" style="left:828px;top:374px;line-height:20px;font-size:16.5px;color:#fff;font-weight:bold;transform:scaleX(1.0007);transform-origin:0 0;">Ambiente: HOMOLOGAÇÃO</span>
<div style="left:819px;top:399px;width:233px;height:36px;background:#fff;border:5px solid #22b14c;"></div>
<span class="t" style="left:836px;top:406px;line-height:20px;font-size:16.5px;color:#000;font-weight:bold;transform:scaleX(1.0273);transform-origin:0 0;">Devolução de mercadoria</span>
<div class="gb" style="left:284px;top:460.5px;width:791px;height:45px;border-right:none;"></div>
<span class="gl" style="left:292.8px;top:455.2px;letter-spacing:-0.268px;">Venda</span>
<span class="t" style="left:292.3px;top:466px;line-height:14px;letter-spacing:-0.123px;">Caixa</span>
<div style="left:293px;top:482px;width:56px;height:21px;border:1px solid #7a7a7a;background:#fff;overflow:hidden;"></div>
<svg style="left:334px;top:490px;" width="9" height="6" viewBox="0 0 9 6"><path d="M0.7 0.8L4.5 4.6L8.3 0.8" fill="none" stroke="#444" stroke-width="1.1"/></svg>
<span class="t" style="left:466.55px;top:466px;line-height:14px;letter-spacing:-0.103px;">Gerente</span>
<div style="left:465px;top:482px;width:56px;height:21px;border:1px solid #7a7a7a;background:#fff;overflow:hidden;"></div>
<svg style="left:506px;top:490px;" width="9" height="6" viewBox="0 0 9 6"><path d="M0.7 0.8L4.5 4.6L8.3 0.8" fill="none" stroke="#444" stroke-width="1.1"/></svg>
<span class="t" style="left:635.55px;top:466px;line-height:14px;letter-spacing:-0.174px;">Vendedor</span>
<div style="left:636px;top:482px;width:56px;height:21px;border:1px solid #7a7a7a;background:#fff;overflow:hidden;"></div>
<svg style="left:677px;top:490px;" width="9" height="6" viewBox="0 0 9 6"><path d="M0.7 0.8L4.5 4.6L8.3 0.8" fill="none" stroke="#444" stroke-width="1.1"/></svg>
<div class="gb" style="left:284px;top:513.5px;width:791px;height:139px;border-right:none;"></div>
<span class="gl" style="left:292.8px;top:508.2px;letter-spacing:0.079px;">Totais</span>
<span class="t" style="left:291.55px;top:518px;line-height:14px;letter-spacing:-0.179px;">% Desc.</span>
<div class="ind" style="left:292px;top:532px;width:56px;height:19px;"><span class="t" style="left:0.9px;top:1px;line-height:14px;letter-spacing:0.357px;">0,00</span></div>
<span class="t" style="left:354.3px;top:518px;line-height:14px;letter-spacing:-0.056px;">Dsc percent</span>
<div class="ing" style="left:355px;top:531px;width:57px;height:21px;"><span class="t" style="left:0.9px;top:2px;line-height:14px;letter-spacing:0.357px;">0,00</span></div>
<span class="t" style="left:417.3px;top:518px;line-height:14px;letter-spacing:-0.074px;">Dsc sobre Itens</span>
<div class="ing" style="left:418px;top:531px;width:67px;height:21px;"><span class="t" style="left:0.9px;top:2px;line-height:14px;letter-spacing:0.357px;">0,00</span></div>
<div style="left:494px;top:522px;width:1px;height:64px;background:#9a9a9a;"></div>
<span class="t" style="left:499.3px;top:519px;line-height:14px;transform:scaleX(0.9236);transform-origin:0 0;">Base ICMS</span>
<div class="ing" style="left:500px;top:532px;width:67px;height:21px;"><span class="t" style="left:0.9px;top:2px;line-height:14px;letter-spacing:0.357px;">0,00</span></div>
<span class="t" style="left:569.3px;top:519px;line-height:14px;letter-spacing:-0.310px;">Valor ICMS</span>
<div class="ing" style="left:570px;top:532px;width:67px;height:21px;"><span class="t" style="left:0.9px;top:2px;line-height:14px;letter-spacing:0.357px;">0,00</span></div>
<span class="t" style="left:640.55px;top:519px;line-height:14px;transform:scaleX(0.9125);transform-origin:0 0;">Base ICMS ST</span>
<div class="ing" style="left:641px;top:532px;width:67px;height:21px;"><span class="t" style="left:0.9px;top:2px;line-height:14px;letter-spacing:0.357px;">0,00</span></div>
<span class="t" style="left:711.8px;top:519px;line-height:14px;transform:scaleX(0.9221);transform-origin:0 0;">Valor ICMS ST</span>
<div class="ing" style="left:712px;top:532px;width:66px;height:21px;"><span class="t" style="left:0.9px;top:2px;line-height:14px;letter-spacing:0.357px;">0,00</span></div>
<span class="t" style="left:781.55px;top:519px;line-height:14px;letter-spacing:-0.019px;">Base II</span>
<div class="ing" style="left:782px;top:532px;width:67px;height:21px;"><span class="t" style="left:0.9px;top:2px;line-height:14px;letter-spacing:0.357px;">0,00</span></div>
<span class="t" style="left:852.3px;top:519px;line-height:14px;letter-spacing:0.193px;">Valor II</span>
<div class="ing" style="left:853px;top:532px;width:66px;height:21px;"><span class="t" style="left:0.9px;top:2px;line-height:14px;letter-spacing:0.357px;">0,00</span></div>
<div style="left:924px;top:522px;width:1px;height:64px;background:#9a9a9a;"></div>
<span class="t" style="left:929.3px;top:519px;line-height:14px;letter-spacing:-0.284px;">Valor ISS</span>
<div class="ing" style="left:930px;top:532px;width:67px;height:21px;"><span class="t" style="left:0.9px;top:2px;line-height:14px;letter-spacing:0.357px;">0,00</span></div>
<span class="t" style="left:1000.55px;top:519px;line-height:14px;letter-spacing:-0.020px;">Total serviços</span>
<div class="ing" style="left:1001px;top:532px;width:67px;height:21px;"><span class="t" style="left:0.9px;top:2px;line-height:14px;letter-spacing:0.357px;">0,00</span></div>
<span class="t" style="left:290.3px;top:553px;line-height:14px;letter-spacing:-0.172px;">Dsc cortesia</span>
<div class="in" style="left:291px;top:566px;width:58px;height:21px;"><span class="t" style="left:0.9px;top:2px;line-height:14px;letter-spacing:0.357px;">0,00</span></div>
<span class="t" style="left:354.3px;top:553px;line-height:14px;letter-spacing:-0.289px;">Dsc Progres</span>
<div class="ing" style="left:355px;top:566px;width:57px;height:21px;"><span class="t" style="left:0.9px;top:2px;line-height:14px;letter-spacing:0.357px;">0,00</span></div>
<span class="t" style="left:417.3px;top:553px;line-height:14px;letter-spacing:0.053px;">Total desconto</span>
<div class="ing" style="left:418px;top:566px;width:67px;height:21px;"><span class="t" style="left:0.9px;top:2px;line-height:14px;letter-spacing:0.357px;">0,00</span></div>
<span class="t" style="left:499.3px;top:553px;line-height:14px;letter-spacing:-0.284px;">Valor PIS</span>
<div class="ing" style="left:500px;top:566px;width:67px;height:21px;"><span class="t" style="left:0.9px;top:2px;line-height:14px;letter-spacing:0.357px;">0,00</span></div>
<span class="t" style="left:569.3px;top:553px;line-height:14px;letter-spacing:-0.398px;">Valor PIS ST</span>
<div class="ing" style="left:570px;top:566px;width:66px;height:21px;"><span class="t" style="left:0.9px;top:2px;line-height:14px;letter-spacing:0.357px;">0,00</span></div>
<span class="t" style="left:640.55px;top:553px;line-height:14px;letter-spacing:-0.395px;">Valor COFINS</span>
<div class="ing" style="left:641px;top:566px;width:67px;height:21px;"><span class="t" style="left:0.9px;top:2px;line-height:14px;letter-spacing:0.357px;">0,00</span></div>
<span class="t" style="left:711.8px;top:553px;line-height:14px;transform:scaleX(0.9196);transform-origin:0 0;">Valor COFINS ST</span>
<div class="ing" style="left:712px;top:566px;width:66px;height:21px;"><span class="t" style="left:0.9px;top:2px;line-height:14px;letter-spacing:0.357px;">0,00</span></div>
<span class="t" style="left:929.3px;top:553px;line-height:14px;letter-spacing:-0.245px;">Valor IRRF</span>
<div class="ing" style="left:930px;top:566px;width:67px;height:21px;"><span class="t" style="left:0.9px;top:2px;line-height:14px;letter-spacing:0.357px;">0,00</span></div>
<span class="t" style="left:1000.55px;top:553px;line-height:14px;transform:scaleX(0.9280);transform-origin:0 0;">CSRF Retido</span>
<div class="ing" style="left:1001px;top:566px;width:67px;height:21px;"><span class="t" style="left:0.9px;top:2px;line-height:14px;letter-spacing:0.357px;">0,00</span></div>
<div style="left:291px;top:591px;width:776px;height:1px;background:#a0a0a0;"></div>
<div style="left:291px;top:592px;width:776px;height:1px;background:#f0f0f0;"></div>
<span class="t" style="left:290.3px;top:594px;line-height:14px;letter-spacing:-0.097px;">Desc Cond (Geral / Itens)</span>
<div class="in" style="left:291px;top:607px;width:58px;height:21px;"><span class="t" style="left:0.9px;top:2px;line-height:14px;letter-spacing:0.357px;">0,00</span></div>
<div class="ing" style="left:355px;top:607px;width:57px;height:21px;"><span class="t" style="left:0.9px;top:2px;line-height:14px;letter-spacing:0.357px;">0,00</span></div>
<span class="t" style="left:417.3px;top:593px;line-height:14px;letter-spacing:0.176px;">Frete</span>
<div class="in" style="left:418px;top:607px;width:63px;height:21px;"><span class="t" style="left:0.9px;top:2px;line-height:14px;letter-spacing:0.357px;">0,00</span></div>
<span class="t" style="left:484.3px;top:594px;line-height:14px;letter-spacing:-0.218px;">Seguro</span>
<div class="in" style="left:485px;top:607px;width:63px;height:21px;"><span class="t" style="left:0.9px;top:2px;line-height:14px;letter-spacing:0.357px;">0,00</span></div>
<span class="t" style="left:551.55px;top:594px;line-height:14px;letter-spacing:-0.209px;">D. acessórias</span>
<div class="in" style="left:552px;top:607px;width:63px;height:21px;"><span class="t" style="left:0.9px;top:2px;line-height:14px;letter-spacing:0.357px;">0,00</span></div>
<span class="t" style="left:618.55px;top:594px;line-height:14px;letter-spacing:0.205px;">Total IPI</span>
<div class="ing" style="left:619px;top:607px;width:63px;height:21px;"><span class="t" style="left:0.9px;top:2px;line-height:14px;letter-spacing:0.357px;">0,00</span></div>
<span class="t" style="left:685.55px;top:594px;line-height:14px;letter-spacing:-0.348px;">Total FCP ST</span>
<div class="ing" style="left:686px;top:607px;width:61px;height:21px;"><span class="t" style="left:0.9px;top:2px;line-height:14px;letter-spacing:0.357px;">0,00</span></div>
<span class="t" style="left:750.55px;top:594px;line-height:14px;letter-spacing:0.079px;">Total produtos</span>
<div class="ing" style="left:751px;top:607px;width:75px;height:21px;"><span class="t" style="left:0.9px;top:2px;line-height:14px;letter-spacing:0.357px;">0,00</span></div>
<span class="t" style="left:829.8px;top:594px;line-height:14px;letter-spacing:0.023px;">Total a pagar</span>
<div class="ing" style="left:830px;top:607px;width:80px;height:21px;"><span class="t" style="left:0.9px;top:2px;line-height:14px;letter-spacing:0.357px;">0,00</span></div>
<span class="t" style="left:914.05px;top:594px;line-height:14px;letter-spacing:0.053px;">Total da nota</span>
<div class="ing" style="left:914px;top:607px;width:75px;height:21px;"><span class="t" style="left:0.9px;top:2px;line-height:14px;letter-spacing:0.357px;">0,00</span></div>
<div style="left:279px;top:659px;width:801px;height:20px;background:#efefef;border:1px solid #a2a2a2;"></div>
<div style="left:631px;top:660px;width:3px;height:18px;background:#a8a8a8;"></div>
<div style="left:916px;top:660px;width:3px;height:18px;background:#a8a8a8;"></div>
<span class="t" style="left:920.55px;top:663px;line-height:14px;letter-spacing:0.102px;">Tempo: 00:00:00</span>
<svg style="left:1065px;top:664px;" width="14" height="14" viewBox="0 0 14 14"><path d="M14 0.5L0.5 14M14 5L5 14M14 9.5L9.5 14" stroke="#a2a2a2" stroke-width="1.3"/><path d="M14 2.6L2.6 14M14 7.1L7.1 14M14 11.6L11.6 14" stroke="#fff" stroke-width="1.6"/></svg>
</body></html>
